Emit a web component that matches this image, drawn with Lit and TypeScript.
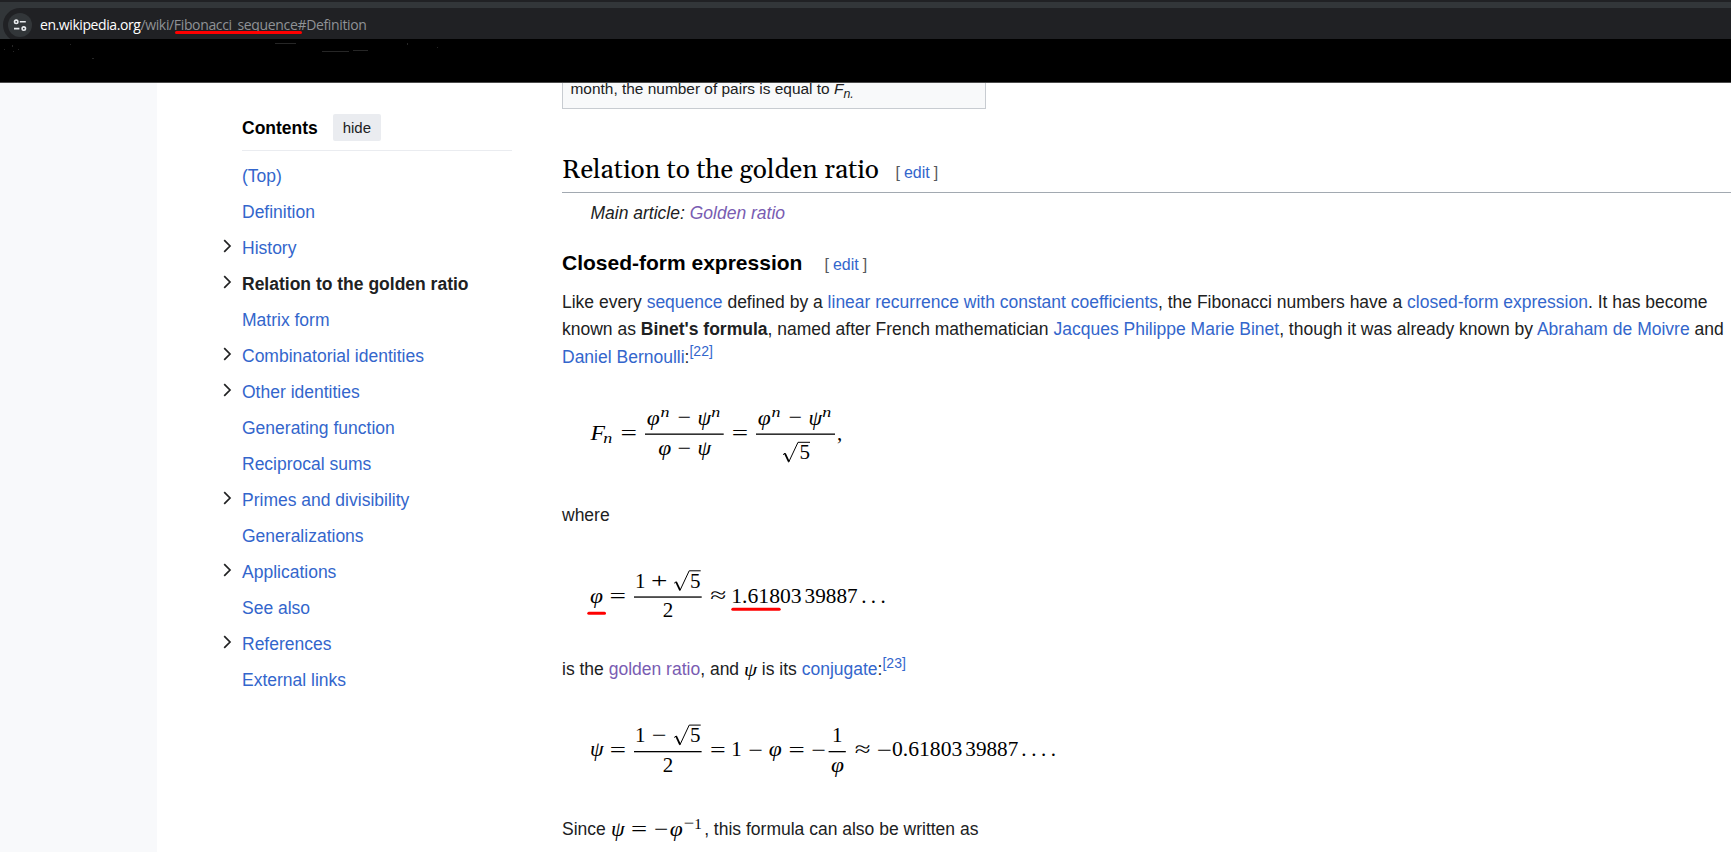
import { LitElement, html, svg, css } from "lit";
import { customElement } from "lit/decorators.js";

const SERIF_OP_BEARING = 0.06;

/** Operator glyph stretched so that its ink runs from x0 to x1, centred on y. */
const op = (ch: string, x0: number, x1: number, y: number, size = 21) => {
  const w = x1 - x0;
  return svg`<text x=${x0 - w * SERIF_OP_BEARING} y=${y + size * 0.253} font-size=${size}
    textLength=${w * (1 + 2 * SERIF_OP_BEARING)} lengthAdjust="spacingAndGlyphs">${ch}</text>`;
};
const num = (s: string, x: number, y: number, len = 0, size = 21) =>
  len
    ? svg`<text x=${x} y=${y} font-size=${size} textLength=${len} lengthAdjust="spacingAndGlyphs">${s}</text>`
    : svg`<text x=${x} y=${y} font-size=${size}>${s}</text>`;
const it = (s: string, x: number, y: number, len: number, size = 21) =>
  svg`<text x=${x} y=${y} font-size=${size} font-style="italic" textLength=${len} lengthAdjust="spacingAndGlyphs">${s}</text>`;
const phi = (x: number, y: number) => it("φ", x - 0.5, y, 13);
const psi = (x: number, y: number) => it("ψ", x - 0.3, y, 13.6);
const bar = (x0: number, x1: number, y: number) =>
  svg`<rect x=${x0} y=${y - 0.6} width=${x1 - x0} height="1.3"></rect>`;
/** Radical sign: x is the hook's left end, y the overbar. */
const root = (x: number, y: number, xEnd: number) => svg`
  <path class="thin" d="M${x} ${y + 12.4}l2-1.5"></path>
  <path class="thick" d="M${x + 1.9} ${y + 11}l3.9 8.4"></path>
  <path class="thin" d="M${x + 5.6} ${y + 20}L${x + 15} ${y}H${xEnd}"></path>`;
const mark = (x0: number, x1: number, y: number) =>
  svg`<path class="mark" d="M${x0 + 1.5} ${y}H${x1 - 1.5}"></path>`;

@customElement("browser-bar")
class BrowserBar extends LitElement {
  static styles = css`
    :host { display: block; font-family: "Open Sans", "Noto Sans", sans-serif; }
    .toolbar { height: 39px; box-sizing: border-box; padding: 6px 0 0 3px; background: #323639;
      border-top: 2px solid #202124; overflow: hidden; }
    .pill { height: 34px; border-radius: 17px 0 0 17px; background: #202124; display: flex;
      align-items: center; padding-left: 5px; box-sizing: border-box; }
    .site { width: 24px; height: 24px; border-radius: 50%; background: #323639; display: flex; flex: none; }
    .url { position: relative; margin-left: 8px; font-size: 14px; line-height: 20px; color: #8f9296;
      white-space: nowrap; display: flex; }
    .host { color: #fff; letter-spacing: -0.42px; }
    .path { letter-spacing: -0.35px; }
    .line { position: absolute; left: 135px; top: 16px; width: 127px; height: 3px;
      border-radius: 2px; background: #fe0000; }
    .blank { height: 44px; box-sizing: border-box; background: #000; border-bottom: 1px solid #4b4b4b; }
    .blank svg { display: block; }
  `;
  render() {
    return html`
      <div class="toolbar"><div class="pill">
        <div class="site"><svg width="24" height="24" fill="none" stroke="#e8eaed" stroke-width="1.6">
          <circle cx="8.2" cy="8.8" r="1.7"></circle><path d="M11.8 8.8H17.8M6 15.6H11.4"></path>
          <circle cx="15.8" cy="15.6" r="1.7"></circle></svg></div>
        <div class="url"><span class="host">en.wikipedia.org</span><span class="path">/wiki/Fibonacci_sequence#Definition</span><i class="line"></i></div>
      </div></div>
      <div class="blank"><svg width="450" height="42" fill="#262626">
        <path d="M275 4h21v1h-21zM322 12h27v1h-27zM353 11h15v1h-15zM12 6h1v2h-1zM13 12h1v1h-1zM18 10h1v1h-1zM4 10h1v1h-1zM70 5h1v1h-1zM92 19h2v1h-2zM407 4h1v2h-1zM437 8h1v1h-1z"></path>
      </svg></div>`;
  }
}

@customElement("contents-nav")
class ContentsNav extends LitElement {
  static styles = css`
    :host { display: block; padding: 31px 0 0 85px; }
    .head { display: flex; align-items: center; height: 37px; width: 270px; box-sizing: border-box;
      padding-bottom: 9px; border-bottom: 1px solid #eaecf0; gap: 15px; font-weight: bold; color: #000; }
    .title { padding-top: 2px; }
    .hide { font-size: 15px; line-height: 27px; width: 48px; text-align: center; background: #eaecf0;
      border-radius: 2px; font-weight: normal; color: #202122; }
    .list { padding-top: 7px; }
    .row { height: 36px; line-height: 36px; color: #36c; display: flex; }
    .row.on { color: #202122; font-weight: bold; }
    .arrow { width: 20px; margin-left: -20px; height: 36px; display: block; flex: none; }
  `;
  private items: [string, boolean][] = [
    ["(Top)", false], ["Definition", false], ["History", true], ["Relation to the golden ratio", true],
    ["Matrix form", false], ["Combinatorial identities", true], ["Other identities", true],
    ["Generating function", false], ["Reciprocal sums", false], ["Primes and divisibility", true],
    ["Generalizations", false], ["Applications", true], ["See also", false], ["References", true],
    ["External links", false],
  ];
  render() {
    return html`<div class="head"><span class="title">Contents</span><span class="hide">hide</span></div>
      <div class="list">${this.items.map(([t, open]) => html`
        <div class="row ${t.startsWith("Relation") ? "on" : ""}">
          ${open ? html`<svg class="arrow" viewBox="0 0 20 36" fill="none" stroke="#202122" stroke-width="1.7"><path d="M2.2 10.1L8 16L2.2 21.9"></path></svg>` : ""}
          <span>${t}</span></div>`)}</div>`;
  }
}

@customElement("wiki-article")
class WikiArticle extends LitElement {
  static styles = css`
    :host { display: block; width: 1169px; line-height: 27.5px; color: #202122; }
    a { color: #36c; }
    a.seen { color: #795cb2; }
    sup { font-size: 14px; line-height: 1; vertical-align: baseline; position: relative; top: -7px; }
    .caption { width: 424px; height: 26px; box-sizing: border-box; border: 1px solid #c8ccd1;
      border-top: 0; background: #f8f9fa; padding-left: 7.5px; font-size: 15.45px; line-height: 12px; white-space: nowrap; }
    .caption sub { font-size: 12.4px; line-height: 1; vertical-align: -4px; font-style: italic; }
    h2, h3 { margin: 0; color: #000; display: flex; align-items: baseline; white-space: nowrap; }
    h2 { height: 51px; margin-top: 32px; border-bottom: 1px solid #a2a9b1; font: normal 26.25px/59px Georgia, Gelasio, "Liberation Serif", serif; }
    .h2t { width: 333.5px; }
    h3 { font-size: 21px; line-height: 34px; margin: 18px 0 0; }
    .h3t { width: 262.5px; }
    .edit { font: 16px "Liberation Sans", Arial, sans-serif; color: #54595d; }
    .edit a { margin: 0 4px; }
    .hat { padding-left: 28.5px; font-style: italic; margin-top: 7px; }
    p { margin: 0; white-space: nowrap; }
    .body { margin-top: 9.1px; }
    svg { display: block; font-family: "Liberation Serif", serif; fill: #000; }
    svg.inline { display: inline-block; vertical-align: top; overflow: visible; }
    .thin { fill: none; stroke: #000; stroke-width: 1; }
    .thick { fill: none; stroke: #000; stroke-width: 1.8; }
    .mark { fill: none; stroke: #fe0000; stroke-width: 3; stroke-linecap: round; }
  `;
  render() {
    return html`
      <div class="caption">month, the number of pairs is equal to <i>F</i><sub>n.</sub></div>
      <h2><span class="h2t">Relation to the golden ratio</span><span class="edit">[<a>edit</a>]</span></h2>
      <div class="hat">Main article: <a class="seen">Golden ratio</a></div>
      <h3><span class="h3t">Closed-form expression</span><span class="edit">[<a>edit</a>]</span></h3>
      <p class="body">Like every <a>sequence</a> defined by a <a>linear recurrence with constant coefficients</a>, the Fibonacci numbers have a <a>closed-form expression</a>. It has become<br>known as <b>Binet's formula</b>, named after French mathematician <a>Jacques Philippe Marie Binet</a>, though it was already known by <a>Abraham de Moivre</a> and<br><a>Daniel Bernoulli</a>:<sup><a>[22]</a></sup></p>
      <svg width="600" height="130.5" viewBox="562 370.5 600 130.5">
        ${it("F", 590.5, 439.7, 14.5)}${it("n", 603.3, 442.7, 9, 15)}
        ${op("=", 621.3, 636, 433.7)}${bar(645, 723.7, 433.6)}
        ${phi(647.3, 424)}${it("n", 660.4, 416.7, 9, 15)}${op("−", 678.3, 690.3, 418.5)}${psi(697.7, 424)}${it("n", 711.2, 416.7, 9, 15)}
        ${phi(658.7, 454.8)}${op("−", 678.3, 690.3, 449.3)}${psi(697.7, 454.8)}
        ${op("=", 732.7, 747.3, 433.7)}${bar(756, 835, 433.6)}
        ${phi(758.3, 424)}${it("n", 771.5, 416.7, 9, 15)}${op("−", 789.3, 801.3, 418.5)}${psi(808.7, 424)}${it("n", 822.2, 416.7, 9, 15)}
        ${root(783, 441.8, 810)}${num("5", 799.6, 458.7)}${num(",", 837, 439.5)}
      </svg>
      <p>where</p>
      <svg width="600" height="126.5" viewBox="562 529 600 126.5">
        ${phi(590.5, 603)}${op("=", 610.3, 625, 597.3)}${bar(634, 701.7, 597)}
        ${num("1", 635, 587.5)}${op("+", 652, 666.7, 582.3)}${root(674.2, 570.8, 700.7)}${num("5", 690, 587.5)}
        ${num("2", 662.8, 617.3)}${op("≈", 711, 725.3, 596.5)}
        ${num("1.61803", 731.3, 602.7, 70.3)}${num("39887", 804.6, 602.7, 53)}
        ${num(".", 861.2, 602.7)}${num(".", 870.8, 602.7)}${num(".", 880.4, 602.7)}
        ${mark(587.3, 606, 613.3)}${mark(731.3, 780.7, 609.3)}
      </svg>
      <p>is the <a class="seen">golden ratio</a>, and <svg class="inline" width="13" height="27" viewBox="744.5 655 13 27">${it("ψ", 744.5, 675, 13, 18)}</svg> is its <a>conjugate</a>:<sup><a>[23]</a></sup></p>
      <svg width="600" height="133.1" viewBox="562 682.7 600 133.1">
        ${psi(590.3, 756)}${op("=", 610.6, 625.1, 751)}${bar(634, 701.6, 751.3)}
        ${num("1", 635, 741.7)}${op("−", 652.6, 665.7, 736)}${root(674.2, 724.8, 700.7)}${num("5", 690, 741.7)}${num("2", 662.8, 771.3)}
        ${op("=", 710.9, 724.9, 751)}${num("1", 731.3, 756)}${op("−", 749.1, 762.1, 751)}${phi(769.3, 756)}
        ${op("=", 789.4, 803.9, 751)}${op("−", 812.1, 825.1, 751)}${bar(828.6, 845.8, 751.3)}
        ${num("1", 832, 741.7)}${phi(831.4, 771.3)}${op("≈", 855.5, 869.6, 750.5)}
        ${op("−", 877.5, 891, 751)}${num("0.61803", 892, 756, 70.3)}${num("39887", 965.3, 756, 53)}
        ${num(".", 1021.3, 756)}${num(".", 1031.2, 756)}${num(".", 1040.9, 756)}${num(".", 1050.8, 756)}
      </svg>
      <p>Since <svg class="inline" width="93.5" height="27" viewBox="611 815 93.5 27">
        ${psi(611.3, 835)}${op("=", 632, 646.4, 830)}${op("−", 654.7, 667.4, 830)}${phi(670.2, 835)}
        ${op("−", 684, 693.4, 823.7, 15)}${num("1", 694.3, 828, 0, 15)}
      </svg>, this formula can also be written as</p>`;
  }
}

@customElement("app-root")
class AppRoot extends LitElement {
  static styles = css`
    :host { display: flex; flex-direction: column; height: 852px; overflow: hidden; background: #fff;
      font-family: "Liberation Sans", Arial, sans-serif; font-size: 17.5px; }
    .page { flex: 1; display: grid; grid-template-columns: 157px 405px 1169px; min-height: 0; }
    .gutter { background: #f8f9fb; }
  `;
  render() {
    return html`<browser-bar></browser-bar>
      <div class="page"><div class="gutter"></div><contents-nav></contents-nav><wiki-article></wiki-article></div>`;
  }
}
